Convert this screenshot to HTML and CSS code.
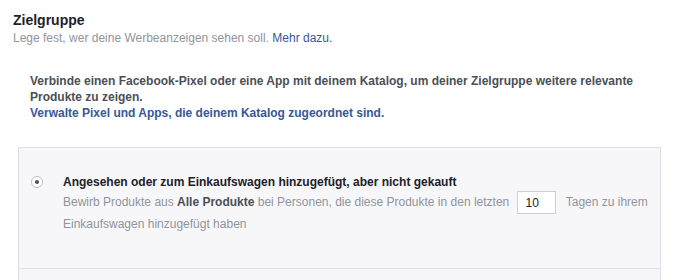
FILE: index.html
```html
<!DOCTYPE html>
<html lang="de">
<head>
    <meta charset="UTF-8">
    <title>Zielgruppe</title>
    <link rel="stylesheet" href="styles.css">
</head>
<body>
    <section class="audience">
        <h2>Zielgruppe</h2>
        <p class="subtitle">Lege fest, wer deine Werbeanzeigen sehen soll. <a href="#">Mehr dazu.</a></p>

        <div class="notice">
            <p>Verbinde einen Facebook-Pixel oder eine App mit deinem Katalog, um deiner Zielgruppe weitere relevante Produkte zu zeigen.</p>
            <a href="#">Verwalte Pixel und Apps, die deinem Katalog zugeordnet sind.</a>
        </div>

        <div class="options">
            <label class="option">
                <span class="radio checked"></span>
                <div class="option-body">
                    <div class="option-title">Angesehen oder zum Einkaufswagen hinzugefügt, aber nicht gekauft</div>
                    <div class="option-desc">Bewirb Produkte aus <b>Alle Produkte</b> bei Personen, die diese Produkte in den letzten <input type="text" value="10"> Tagen zu ihrem Einkaufswagen hinzugefügt haben</div>
                </div>
            </label>
            <div class="option"></div>
        </div>
    </section>
</body>
</html>
```

FILE: styles.css
```css
body {
    margin: 0;
    background-color: #fff;
    font-family: "Liberation Sans", Arial, sans-serif;
    font-size: 12px;
    color: #1d2129;
}

a {
    color: #365899;
    text-decoration: none;
}

.audience {
    padding: 11px 17px 0 13px;
}

.audience h2 {
    margin: 0;
    font-size: 14px;
    line-height: 18px;
    font-weight: bold;
    color: #1d2129;
}

.subtitle {
    margin: 1px 0 0;
    line-height: 16px;
    color: #90949c;
}

.notice {
    padding: 0 17px;
    margin-top: 27px;
    font-weight: bold;
    color: #4b4f56;
    line-height: 16px;
}

.notice p {
    margin: 0;
}

.options {
    margin-top: 26px;
    margin-left: 5px;
    border: 1px solid #dddfe2;
    border-bottom: none;
    background-color: #f7f7fa;
}

.option {
    display: flex;
    align-items: flex-start;
    padding: 26px 2px 33px 12px;
    border-bottom: 1px solid #dddfe2;
    min-height: 30px;
}

.radio {
    flex: none;
    width: 10px;
    height: 10px;
    margin: 2px 20px 0 0;
    border: 1px solid #bec2c9;
    border-radius: 50%;
    background-color: #fff;
    position: relative;
}

.radio.checked::after {
    content: "";
    position: absolute;
    top: 3px;
    left: 3px;
    width: 4px;
    height: 4px;
    border-radius: 50%;
    background-color: #4b4f56;
}

.option-title {
    font-weight: bold;
    color: #1d2129;
    line-height: 16px;
}

.option-desc {
    color: #90949c;
    line-height: 21px;
    margin-top: 1px;
}

.option-desc b {
    color: #4b4f56;
}

.option-desc input {
    width: 39px;
    height: 23px;
    box-sizing: border-box;
    margin: 0 7px 0 4px;
    padding: 0 8px;
    border: 1px solid #ccd0d5;
    background-color: #fff;
    font-family: inherit;
    font-size: 12px;
    color: #1d2129;
    vertical-align: middle;
}
```
